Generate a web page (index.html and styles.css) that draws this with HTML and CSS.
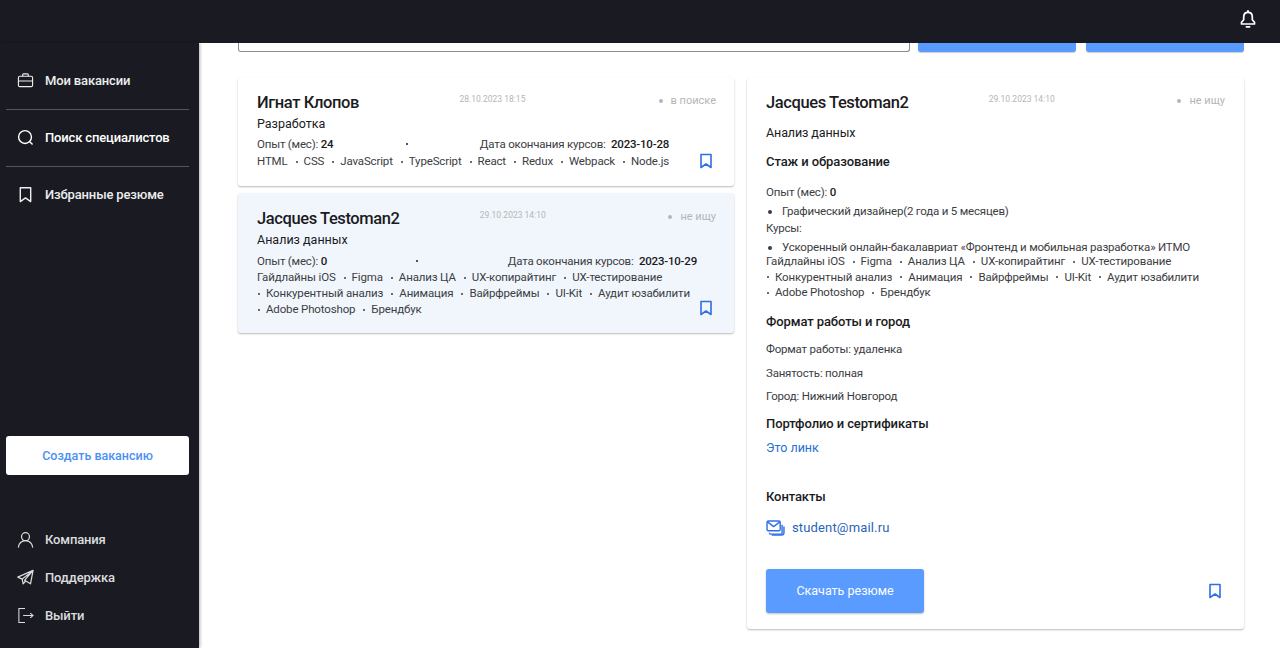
FILE: index.html
```html
<!DOCTYPE html>
<html lang="ru">
<head>
  <meta charset="UTF-8" />
  <title>Поиск специалистов</title>
  <link rel="stylesheet" href="styles.css">
</head>
<body>
  <header class="topbar">
    <svg class="bell" viewBox="0 0 18 18" fill="none" stroke="currentColor" stroke-width="1.700" stroke-linejoin="round" stroke-linecap="round">
      <path d="M9 .8v1.200"/>
      <path d="M9 2.400c-2.800 0-4.300 2-4.300 4.500v2.800L2.500 12.300v1.700h13v-1.700l-2.200-2.600V6.900c0-2.500-1.500-4.500-4.300-4.500z"/>
      <path d="M7.400 16.800h3.200"/>
    </svg>
  </header>

  <div class="layout">
    <aside class="sidebar">
      <nav class="nav-top">
        <a class="nav-item">
          <svg class="nav-icon" viewBox="0 0 18 18" fill="none" stroke="currentColor" stroke-width="1.200">
            <rect x="1.500" y="4.500" width="15" height="11" rx="1.500"/>
            <path d="M6 4.500V3a1 1 0 0 1 1-1h4a1 1 0 0 1 1 1v1.500M1.500 9.500h15"/>
          </svg>
          Мои вакансии
        </a>
        <a class="nav-item nav-item-active">
          <svg class="nav-icon" viewBox="0 0 18 18" fill="none" stroke="currentColor" stroke-width="1.500">
            <circle cx="8.500" cy="8.500" r="6.800"/>
            <path d="M13.500 13.500l3 3"/>
          </svg>
          Поиск специалистов
        </a>
        <a class="nav-item">
          <svg class="nav-icon" viewBox="0 0 18 18" fill="none" stroke="currentColor" stroke-width="1.500" stroke-linejoin="round">
            <path d="M3.500 1.800h11v14.700L9 12.600l-5.500 3.900z"/>
          </svg>
          Избранные резюме
        </a>
      </nav>

      <button class="create-btn">Создать вакансию</button>

      <nav class="nav-bottom">
        <a class="nav-link">
          <svg class="nav-icon" viewBox="0 0 18 18" fill="none" stroke="currentColor" stroke-width="1.300" stroke-linecap="round">
            <circle cx="9" cy="6" r="4.200"/>
            <path d="M1.500 17c.3-3.800 3.400-6.800 7.500-6.800s7.200 3 7.500 6.800"/>
          </svg>
          Компания
        </a>
        <a class="nav-link">
          <svg class="nav-icon" viewBox="0 0 18 18" fill="none" stroke="currentColor" stroke-width="1.300" stroke-linejoin="round">
            <path d="M17 1.500L.8 8.600l4.700 2.100L16 2.500l-8 9.500 6.300 3.700z"/>
            <path d="M5.500 10.700l1 5 2.700-3"/>
          </svg>
          Поддержка
        </a>
        <a class="nav-link">
          <svg class="nav-icon" viewBox="0 0 18 18" fill="none" stroke="currentColor" stroke-width="1.100">
            <path d="M8.500 1.500H2v15h6.500"/>
            <path d="M6.500 9H17M14 6.500L17 9l-3 2.500"/>
          </svg>
          Выйти
        </a>
      </nav>
    </aside>

    <main class="content">
      <div class="search-row">
        <div class="search-input"></div>
        <div class="search-btn"></div>
        <div class="search-btn"></div>
      </div>

      <div class="columns">
        <section class="resume-list">
          <article class="card">
            <div class="card-head">
              <h2 class="name">Игнат Клопов</h2>
              <span class="date">28.10.2023 18:15</span>
              <span class="status">в поиске</span>
            </div>
            <p class="role">Разработка</p>
            <div class="card-body">
              <div class="info">
                <div class="meta">
                  <span>Опыт (мес): <b>24</b></span>
                  <span class="meta-dot"></span>
                  <span>Дата окончания курсов: &nbsp;<b>2023-10-28</b></span>
                </div>
                <ul class="skills">
                  <li>HTML</li><li>CSS</li><li>JavaScript</li><li>TypeScript</li><li>React</li><li>Redux</li><li>Webpack</li><li>Node.js</li>
                </ul>
              </div>
              <svg class="bookmark" viewBox="0 0 14 16" fill="none" stroke="currentColor" stroke-width="1.600" stroke-linejoin="round">
                <path d="M2 1.500h10v13l-5-3.500-5 3.500z"/>
              </svg>
            </div>
          </article>

          <article class="card card-active">
            <div class="card-head">
              <h2 class="name">Jacques Testoman2</h2>
              <span class="date">29.10.2023 14:10</span>
              <span class="status">не ищу</span>
            </div>
            <p class="role">Анализ данных</p>
            <div class="card-body">
              <div class="info">
                <div class="meta">
                  <span>Опыт (мес): <b>0</b></span>
                  <span class="meta-dot"></span>
                  <span>Дата окончания курсов: &nbsp;<b>2023-10-29</b></span>
                </div>
                <ul class="skills">
                  <li>Гайдлайны iOS</li><li>Figma</li><li>Анализ ЦА</li><li>UX-копирайтинг</li><li>UX-тестирование</li><li>Конкурентный анализ</li><li>Анимация</li><li>Вайрфреймы</li><li>UI-Kit</li><li>Аудит юзабилити</li><li>Adobe Photoshop</li><li>Брендбук</li>
                </ul>
              </div>
              <svg class="bookmark" viewBox="0 0 14 16" fill="none" stroke="currentColor" stroke-width="1.600" stroke-linejoin="round">
                <path d="M2 1.500h10v13l-5-3.500-5 3.500z"/>
              </svg>
            </div>
          </article>
        </section>

        <section class="detail">
          <div class="card-head">
            <h2 class="name">Jacques Testoman2</h2>
            <span class="date">29.10.2023 14:10</span>
            <span class="status">не ищу</span>
          </div>
          <p class="detail-role">Анализ данных</p>

          <h3 class="detail-title">Стаж и образование</h3>
          <p class="detail-exp">Опыт (мес): <b>0</b></p>
          <ul class="detail-bullets">
            <li>Графический дизайнер(2 года и 5 месяцев)</li>
          </ul>
          <p class="detail-courses">Курсы:</p>
          <ul class="detail-bullets">
            <li>Ускоренный онлайн-бакалавриат «Фронтенд и мобильная разработка» ИТМО</li>
          </ul>
          <ul class="skills detail-skills">
            <li>Гайдлайны iOS</li><li>Figma</li><li>Анализ ЦА</li><li>UX-копирайтинг</li><li>UX-тестирование</li><li>Конкурентный анализ</li><li>Анимация</li><li>Вайрфреймы</li><li>UI-Kit</li><li>Аудит юзабилити</li><li>Adobe Photoshop</li><li>Брендбук</li>
          </ul>

          <h3 class="detail-title title-format">Формат работы и город</h3>
          <p class="detail-line">Формат работы: удаленка</p>
          <p class="detail-line">Занятость: полная</p>
          <p class="detail-line detail-line-last">Город: Нижний Новгород</p>

          <h3 class="detail-title title-portfolio">Портфолио и сертификаты</h3>
          <a class="detail-link">Это линк</a>

          <h3 class="detail-title title-contacts">Контакты</h3>
          <a class="mail">
            <svg class="mail-icon" viewBox="0 0 20 17" fill="none" stroke="currentColor" stroke-width="1.500" stroke-linejoin="round">
              <rect x="1" y="1" width="14" height="10.500" rx="1.500"/>
              <path d="M1.500 2l6.500 5 6.500-5"/>
              <path d="M3.500 13.500c0 1 .7 1.500 1.500 1.500h10.500c1 0 1.500-.7 1.500-1.500V5"/>
              <path d="M6 16h10.500c1.500 0 2.500-1 2.500-2.500V7"/>
            </svg>
            student@mail.ru
          </a>

          <div class="detail-foot">
            <button class="download-btn">Скачать резюме</button>
            <svg class="bookmark" viewBox="0 0 14 16" fill="none" stroke="currentColor" stroke-width="1.600" stroke-linejoin="round">
              <path d="M2 1.500h10v13l-5-3.500-5 3.500z"/>
            </svg>
          </div>
        </section>
      </div>
    </main>
  </div>
</body>
</html>
```

FILE: styles.css
```css
* {
  box-sizing: border-box;
}
body {
  margin: 0;
  height: 100vh;
  overflow: hidden;
  background: white;
  color: #1a1b22;
  font-family: Roboto, 'Noto Sans', sans-serif;
  font-size: 11.500px;
  letter-spacing: -0.2px;
  display: flex;
  flex-direction: column;
}
h2, h3, p, ul {
  margin: 0;
  padding: 0;
}
b {
  font-weight: 500;
  color: #1a1b22;
}

.topbar {
  height: 43px;
  flex: none;
  background: #1a1b22;
  color: white;
  display: flex;
  justify-content: flex-end;
  align-items: center;
  padding: 0 23px 5px 0;
}
.bell {
  width: 18px;
  height: 18px;
}

.layout {
  flex: 1;
  display: flex;
  min-height: 0;
}

/* sidebar */
.sidebar {
  width: 199px;
  flex: none;
  background: #1a1b22;
  color: #eceded;
  padding: 9px 10px 0 6px;
  display: flex;
  flex-direction: column;
  box-shadow: 1px 0 3px rgba(0, 0, 0, 0.3);
}
.nav-item {
  display: flex;
  align-items: center;
  gap: 11px;
  height: 57px;
  padding-left: 11px;
  font-size: 13px;
  font-weight: 500;
  letter-spacing: -0.15px;
  box-shadow: 0 1px 0 #55565c;
}
.nav-item:last-child {
  box-shadow: none;
}
.nav-item-active {
  color: white;
}
.nav-icon {
  width: 17px;
  height: 17px;
  flex: none;
}
.create-btn {
  height: 39px;
  margin-top: 213px;
  background: white;
  border: 0;
  border-radius: 3px;
  color: #4a90f5;
  font: 500 12.500px Roboto, 'Noto Sans', sans-serif;
}
.nav-bottom {
  margin-top: 55px;
  display: flex;
  flex-direction: column;
  gap: 20px;
}
.nav-link {
  display: flex;
  align-items: center;
  gap: 11px;
  height: 18px;
  padding-left: 11px;
  font-size: 13px;
  font-weight: 500;
  letter-spacing: -0.15px;
  color: #dcdcde;
}

/* main area */
.content {
  flex: 1;
  padding: 0 36px 0 39px;
  min-width: 0;
}
.search-row {
  display: flex;
  height: 9px;
}
.search-input {
  width: 672px;
  border: 1px solid #8c8c90;
  border-top: 0;
  border-radius: 0 0 3px 3px;
  margin-right: 8px;
}
.search-btn {
  width: 158px;
  background: #5a9bff;
  border-radius: 0 0 3px 3px;
  box-shadow: 0 1px 1px rgba(0, 0, 0, 0.2);
}
.search-btn + .search-btn {
  margin-left: 10px;
}
.columns {
  display: flex;
  align-items: flex-start;
  gap: 13px;
  margin-top: 26px;
}
.resume-list {
  width: 496px;
  flex: none;
  display: flex;
  flex-direction: column;
  gap: 7px;
}

/* cards */
.card {
  padding: 13px 18px 17px 19px;
  border-radius: 3px;
  background: white;
  box-shadow: 0 1px 2px rgba(0, 0, 0, 0.28);
}
.card-active {
  background: #f1f6fd;
  padding-top: 14px;
  padding-bottom: 16px;
}
.card-head {
  display: flex;
  justify-content: space-between;
  align-items: flex-start;
}
.name {
  font-size: 16.500px;
  font-weight: 500;
  line-height: 22px;
  letter-spacing: -0.4px;
  padding-top: 1px;
}
.date {
  font-size: 8.500px;
  line-height: 14px;
  letter-spacing: 0;
  color: #b5b5b8;
  padding-top: 1px;
}
.status {
  width: 90px;
  display: flex;
  justify-content: flex-end;
  align-items: center;
  gap: 8px;
  font-size: 11px;
  line-height: 20px;
  letter-spacing: 0;
  color: #b5b5b8;
}
.status::before {
  content: "";
  width: 4px;
  height: 4px;
  border-radius: 50%;
  background: #b5b5b8;
}
.role {
  font-size: 12.500px;
  letter-spacing: 0;
  line-height: 16px;
  margin-top: 2px;
}
.card-body {
  display: flex;
  justify-content: space-between;
  align-items: flex-end;
  margin-top: 4px;
}
.card-active .card-body {
  margin-top: 5px;
}
.info {
  width: fit-content;
  max-width: 440px;
}
.meta {
  display: flex;
  justify-content: space-between;
  align-items: center;
  line-height: 16px;
  color: #3c3d42;
}
.meta-dot {
  width: 2px;
  height: 2px;
  border-radius: 50%;
  background: #1a1b22;
}
.skills {
  list-style: none;
  display: flex;
  flex-wrap: wrap;
  line-height: 16px;
  letter-spacing: -0.15px;
  color: #3c3d42;
  margin-top: 1px;
}
.card-active .skills {
  margin-top: 0;
}
.skills li:not(:last-child) {
  margin-right: 7px;
}
.skills li + li::before {
  content: "";
  display: inline-block;
  width: 2px;
  height: 2px;
  border-radius: 50%;
  background: #3c3d42;
  vertical-align: middle;
  margin: 0 6px 0 1px;
}
.bookmark {
  width: 14px;
  height: 16px;
  flex: none;
  color: #2f6fe4;
  margin-right: 3px;
}
.card-active .bookmark {
  margin-bottom: 1px;
}

/* detail panel */
.detail {
  flex: 1;
  height: 551px;
  padding: 13px 19px 0;
  border-radius: 3px;
  box-shadow: 0 1px 2px rgba(0, 0, 0, 0.28);
}
.detail-role {
  margin-top: 11px;
  font-size: 12.500px;
  letter-spacing: -0.1px;
  line-height: 16px;
}
.detail-title {
  font-size: 13px;
  font-weight: 500;
  letter-spacing: -0.1px;
  line-height: 16px;
  margin-top: 13px;
}
.detail-exp {
  margin-top: 14px;
  line-height: 16px;
  color: #3c3d42;
}
.detail-bullets {
  padding-left: 16px;
  line-height: 16px;
  margin-top: 3px;
  color: #3c3d42;
}
.detail-courses {
  line-height: 16px;
  margin-top: 1px;
  color: #3c3d42;
}
.detail-skills {
  margin-top: -1px;
  line-height: 15.500px;
}
.title-format {
  margin-top: 13px;
}
.detail-line {
  margin-top: 8px;
  line-height: 16px;
  color: #3c3d42;
}
.title-format + .detail-line {
  margin-top: 11px;
}
.detail-line-last {
  margin-top: 7px;
}
.title-portfolio {
  margin-top: 12px;
}
.detail-link {
  display: block;
  margin-top: 8px;
  font-size: 12.500px;
  letter-spacing: 0;
  line-height: 16px;
  color: #1f6fd6;
}
.title-contacts {
  margin-top: 33px;
}
.mail {
  display: flex;
  align-items: center;
  gap: 7px;
  margin-top: 14px;
  height: 18px;
  font-size: 13px;
  letter-spacing: 0.15px;
  color: #2a64b8;
}
.mail-icon {
  width: 19px;
  height: 16px;
  color: #2f6fe4;
}
.detail-foot {
  display: flex;
  justify-content: space-between;
  align-items: center;
  margin-top: 32px;
}
.download-btn {
  width: 158px;
  height: 44px;
  border: 0;
  border-radius: 3px;
  background: #5a9bff;
  color: white;
  font: 400 12.500px Roboto, 'Noto Sans', sans-serif;
  box-shadow: 0 1px 2px rgba(0, 0, 0, 0.25);
}
```
